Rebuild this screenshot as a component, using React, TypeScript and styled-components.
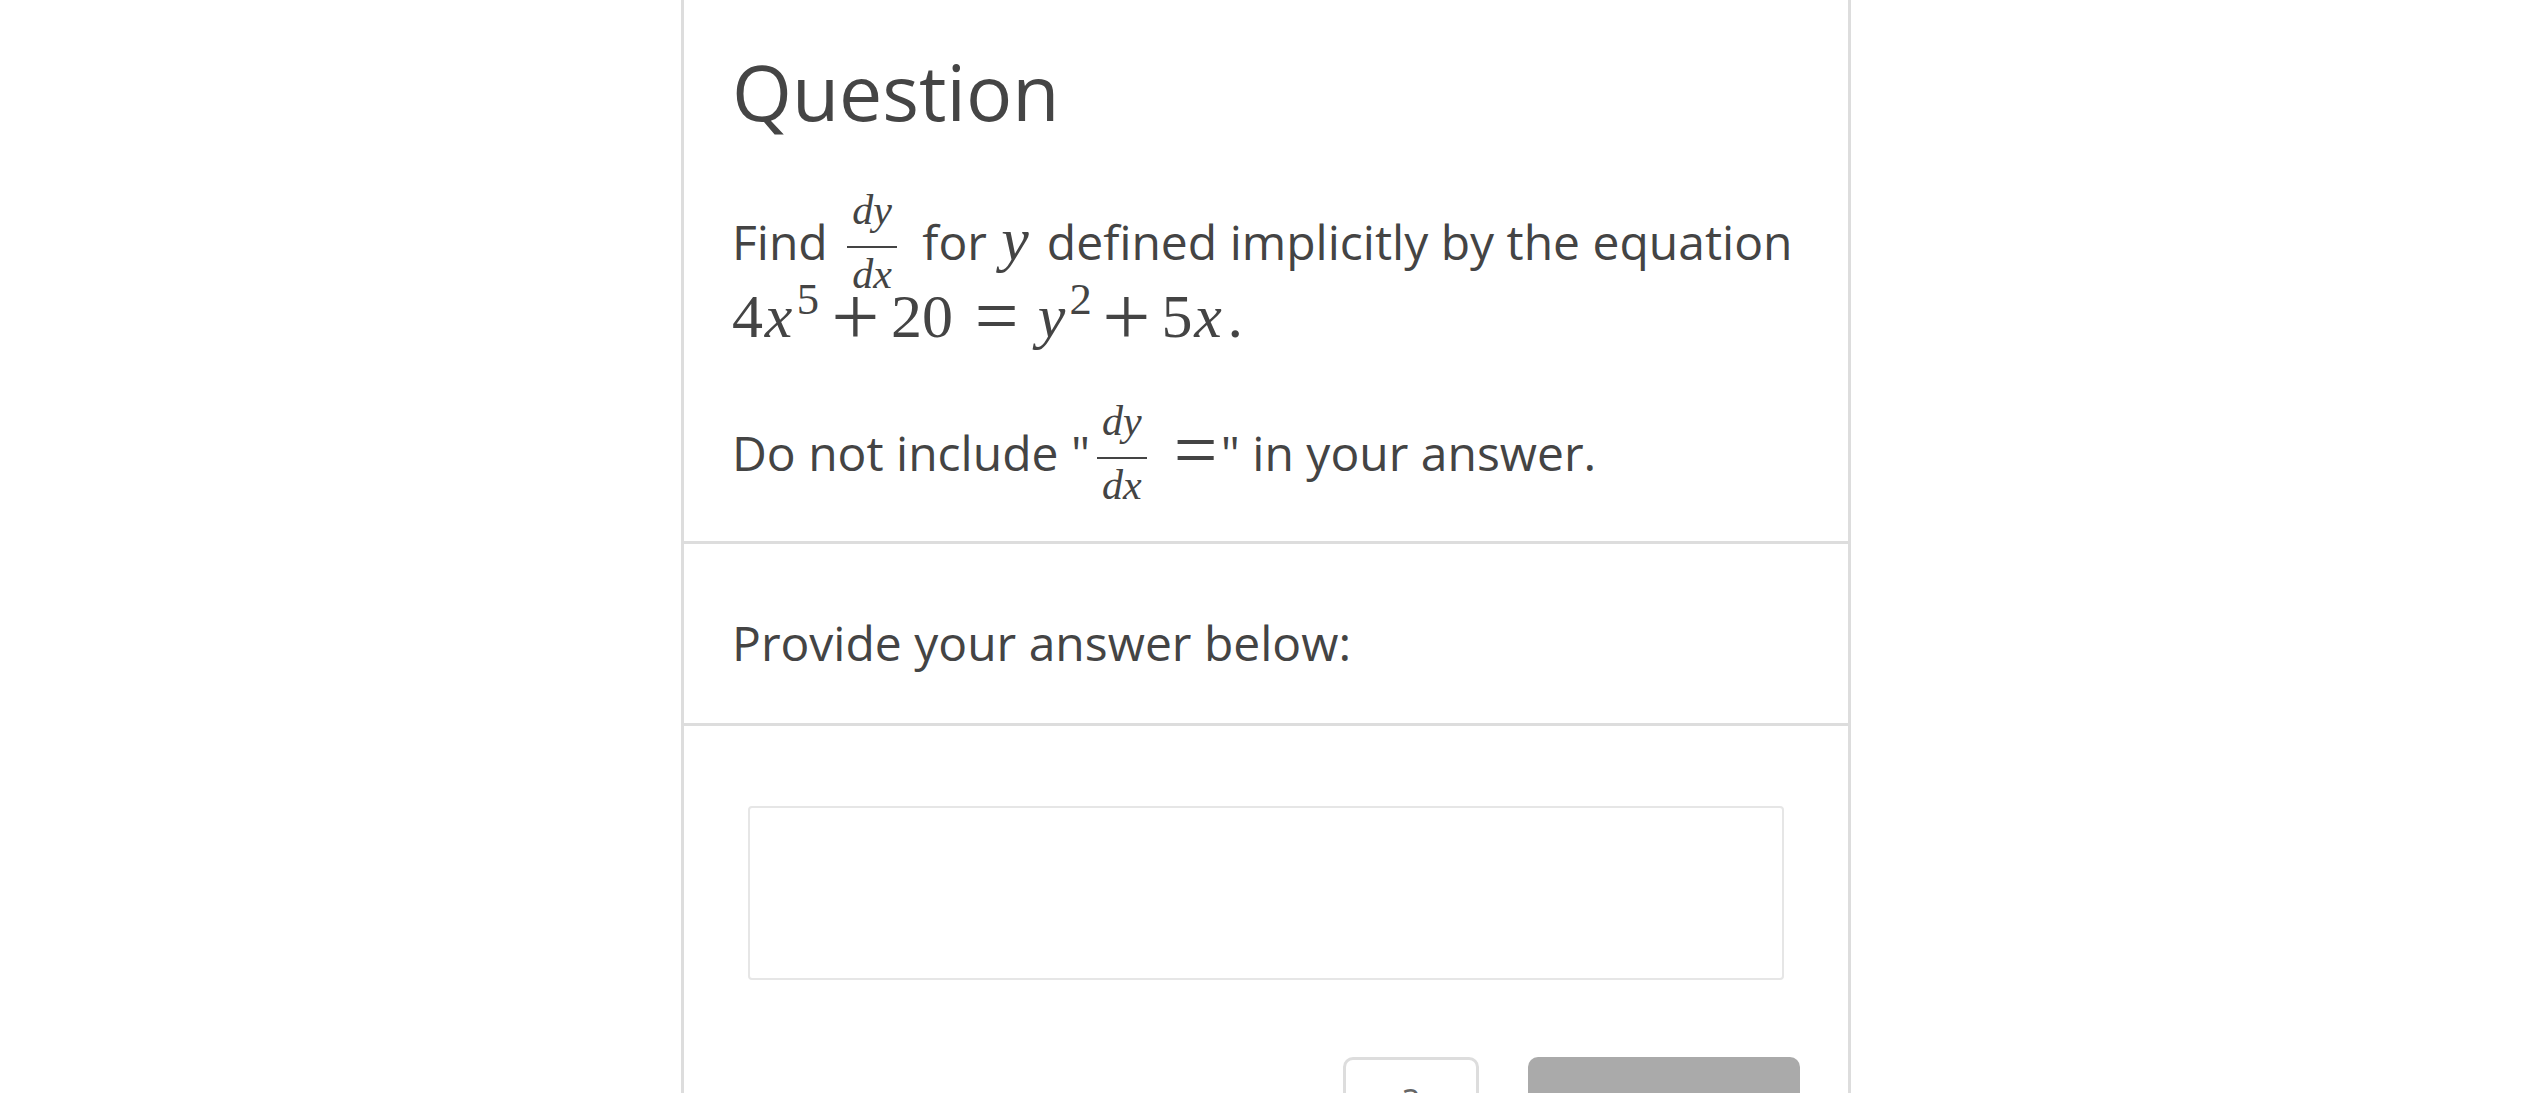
import React from "react";
import styled, { createGlobalStyle } from "styled-components";

const GlobalStyle = createGlobalStyle`
  html, body {
    margin: 0;
    padding: 0;
    background: #fff;
  }
  body {
    font-family: "Open Sans", "Noto Sans", sans-serif;
    color: #444;
  }
`;

const Page = styled.div`
  display: flex;
  justify-content: center;
  height: 100vh;
  overflow: hidden;
`;

const Card = styled.div`
  display: flex;
  flex-direction: column;
  width: 1170px;
  box-sizing: border-box;

  border-left: 3px solid #ddd;
  border-right: 3px solid #ddd;
`;

const Section = styled.section<{ $pad: string }>`
  flex-shrink: 0;
  padding: ${(p) => p.$pad};

  & + & {
    border-top: 3px solid #ddd;
  }
`;

const Heading = styled.h2`
  margin: 0 0 65px;

  font-size: 77px;
  font-weight: 400;
  line-height: 1.2;
  color: #454545;
`;

const Text = styled.p<{ $gap?: number }>`
  margin: 0 0 ${(p) => p.$gap ?? 0}px;

  font-size: 48px;
  line-height: 77px;
`;

const Math = styled.span`
  font-family: "Liberation Serif", "DejaVu Serif", serif;
  font-size: 62px;
  line-height: 0;
  white-space: nowrap;
`;

const Var = styled.i`
  padding: 0 0.09em 0 0.03em;
  font-style: italic;
`;

const Sup = styled.sup`
  margin-left: -0.03em;
  font-size: 0.72em;
  line-height: 0;
  vertical-align: 0.52em;
`;

/* operators drawn a bit larger, like the math font of the page */
const Op = styled.span<{ $l: number; $r: number; $scale?: number }>`
  display: inline-block;
  margin: 0 ${(p) => p.$r}em 0 ${(p) => p.$l}em;

  line-height: 0.5;
  transform: scale(${(p) => p.$scale ?? 1.38});
`;

const Frac = styled.span`
  display: inline-flex;
  flex-direction: column;
  align-items: stretch;
  margin: -18px 13px -17px 7px;
  padding: 0 5px;

  font-size: 42px;
  vertical-align: 36px;
`;

const Num = styled.span`
  display: block;
  margin-bottom: 15px;

  text-align: center;
  font-style: italic;
  line-height: 1;
`;

const Bar = styled.span`
  display: block;
  height: 2px;
  margin: 0 -5px;

  background: #444;
`;

const Den = styled.span`
  display: block;
  margin-top: 5px;

  text-align: center;
  font-style: italic;
  line-height: 1;
`;

const AnswerBox = styled.div`
  height: 174px;
  box-sizing: border-box;

  background: #fff;
  border: 2px solid #e6e6e6;
  border-radius: 4px;
`;

const Actions = styled.div`
  display: flex;
  justify-content: flex-end;
  gap: 49px;
  margin: 77px -16px 0 0;
`;

const Button = styled.button<{ $primary?: boolean }>`
  display: flex;
  justify-content: center;
  align-items: flex-start;
  width: ${(p) => (p.$primary ? 272 : 136)}px;
  height: 90px;
  box-sizing: border-box;
  padding: 24px 0 0;

  font-family: "Open Sans", sans-serif;
  font-size: 36px;
  line-height: 1;
  color: ${(p) => (p.$primary ? "#fff" : "#666")};

  background: ${(p) => (p.$primary ? "#aaa" : "#fff")};
  border: ${(p) => (p.$primary ? "none" : "3px solid #ddd")};
  border-radius: 10px;
`;

const Dydx = () => (
  <Frac>
    <Num>dy</Num>
    <Bar />
    <Den>dx</Den>
  </Frac>
);

export default function App() {
  return (
    <>
      <GlobalStyle />
      <Page>
        <Card>
          <Section $pad="46px 48px 50px">
            <Heading>Question</Heading>
            <Text $gap={57}>
              Find <Math><Dydx /></Math> for <Math><Var>y</Var></Math> defined implicitly by the equation{" "}
              <Math>
                4<Var>x</Var>
                <Sup>5</Sup>
                <Op $l={0.3} $r={0.3}>+</Op>20<Op $l={0.42} $r={0.35} $scale={1.25}>=</Op>
                <Var>y</Var>
                <Sup>2</Sup>
                <Op $l={0.28} $r={0.28}>+</Op>5<Var>x</Var>.
              </Math>
            </Text>
            <Text>
              Do not include "<Math><Dydx /><Op $l={0.3} $r={0.12} $scale={1.25}>=</Op></Math>" in your answer.
            </Text>
          </Section>
          <Section $pad="60px 48px 42px">
            <Text>Provide your answer below:</Text>
          </Section>
          <Section $pad="80px 64px 0">
            <AnswerBox />
            <Actions>
              <Button>?</Button>
              <Button $primary />
            </Actions>
          </Section>
        </Card>
      </Page>
    </>
  );
}
